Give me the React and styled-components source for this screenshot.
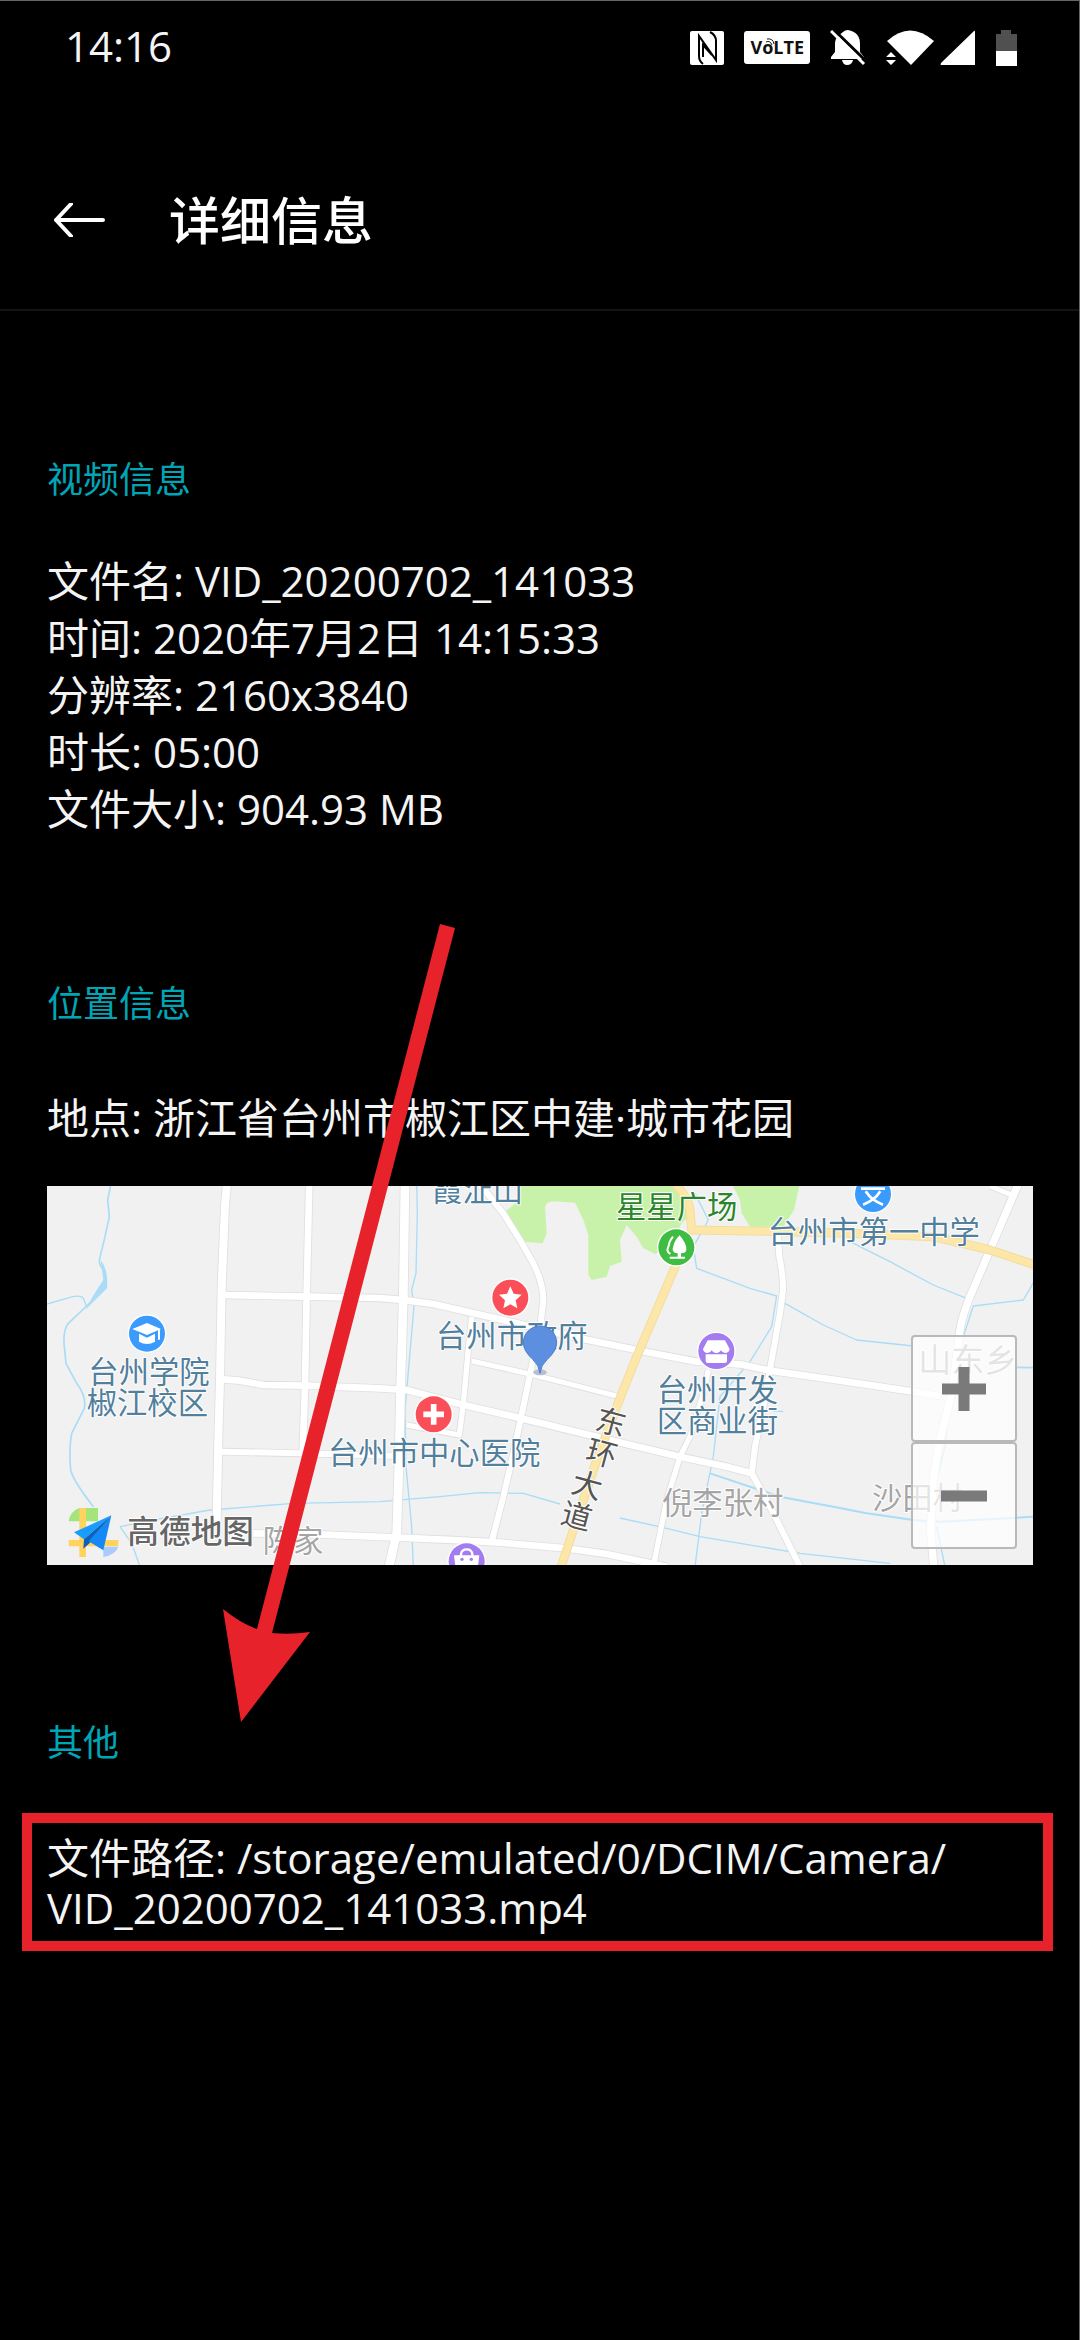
import React from "react";
import styled, { createGlobalStyle } from "styled-components";

const RED = "#e8222a";
const SANS = '"Open Sans", "Noto Sans CJK SC", sans-serif';

const GlobalStyle = createGlobalStyle`
  * { box-sizing: border-box; }
  body { margin: 0; background: #000; }
`;

const Page = styled.div`
  position: relative;
  min-height: 100vh;
  background: #000;
  color: #f4f4f4;
  font-family: ${SANS};
  border-top: 1px solid #666;
  border-right: 1px solid #666;
  overflow: hidden;
`;

const StatusBar = styled.div`
  display: flex;
  align-items: center;
  justify-content: space-between;
  padding: 16px 62px 52px 65px;
`;

const Clock = styled.time`
  padding-bottom: 4px;
  font-size: 42px;
  line-height: 57px;
  font-weight: 400;
`;

const StatusIcons = styled.div`
  display: flex;
  align-items: center;
  gap: 20px;
  svg { display: block; }
`;

const SignalGroup = styled.div`
  display: flex;
  align-items: center;
  gap: 6px;
`;

const VolteBadge = styled.span`
  display: flex;
  background: #fff;
  color: #111;
  border-radius: 3px;
  padding: 0 6px;
  font-size: 18px;
  line-height: 33px;
  font-weight: 700;
`;

const VolteO = styled.span`
  position: relative;
  svg {
    position: absolute;
    top: 7px;
    right: -2px;
  }
`;

const Header = styled.header`
  display: flex;
  align-items: center;
  gap: 63px;
  padding: 60px 52px 59px;
  border-bottom: 2px solid #141414;
`;

const BackButton = styled.button`
  display: block;
  padding: 0;
  border: 0;
  background: none;
  svg { display: block; }
`;

const Title = styled.h1`
  margin: 0;
  font-size: 51px;
  line-height: 60px;
  font-weight: 500;
  color: #fff;
`;

const Content = styled.main`
  display: flex;
  flex-direction: column;
  gap: 143px;
  padding: 145px 46px 145px 47px;
`;

const SectionTitle = styled.h2`
  margin: 0 0 ${(p) => p.$gap}px;
  font-size: 36px;
  line-height: 48px;
  font-weight: 400;
  color: #00a5b6;
`;

const Line = styled.p`
  margin: 0;
  font-size: 42px;
  line-height: ${(p) => (p.$tight ? 50 : 57)}px;
  font-weight: 400;
`;

const PathBox = styled.div`
  margin: 0 -20px 0 -25px;
  padding: 10px 15px 8px;
  border: 10px solid ${RED};
`;

const MapFrame = styled.div`
  position: relative;
  margin: 40px 0 11px;
  height: 379px;
  background: #f1f1f1;
  overflow: hidden;
`;

const MapDrawing = styled.svg`
  display: block;
  width: 100%;
  height: 100%;
  font-family: "Noto Sans CJK SC", sans-serif;
`;

const ZoomControls = styled.div`
  position: absolute;
  right: 16px;
  bottom: 16px;
  display: flex;
  flex-direction: column;
`;

const ZoomButton = styled.button`
  display: flex;
  align-items: center;
  justify-content: center;
  width: 106px;
  height: 107px;
  padding: 0;
  border: 2px solid #b9b9b9;
  border-radius: 4px;
  background: rgba(255, 255, 255, 0.7);
`;

const ArrowOverlay = styled.svg`
  position: absolute;
  left: 0;
  top: 0;
  pointer-events: none;
`;

const roads = [
  [24, "M562 0L555 75L545 320L540 600L535 780L530 1020"],
  [20, "M808 0L800 340L795 620L788 820"],
  [20, "M550 345L800 350L1020 354L1100 361L1180 372L1380 418L1620 475L1800 512L1970 545L2100 553L2190 572L2400 602L2620 635L2700 648"],
  [20, "M550 598L600 602L670 615L800 617L1020 625L1100 630L1260 672L1430 712L1750 790L1920 830L2060 860L2135 880"],
  [18, "M545 815L780 820L1075 828"],
  [26, "M1095 0L1090 350L1082 620L1077 850L1070 1060L1045 1170"],
  [20, "M640 1060L850 1064L1060 1072L1240 1080L1380 1088L1580 1105L1700 1122L1880 1160"],
  [18, "M1310 0L1390 100L1440 180L1480 250Q1510 310 1510 360L1502 430L1475 560L1450 680L1420 820L1390 950L1355 1085"],
  [16, "M1295 410L1282 540L1270 670L1258 765L1100 735"],
  [15, "M1295 543L1470 582L1620 620L1730 648"],
  [16, "M2005 570L1990 640L1950 770L1920 830L1880 960L1840 1160"],
  [18, "M2212 150L2218 230Q2230 290 2229 330L2220 400L2195 540L2170 680L2145 800L2135 880L2180 960L2220 1040L2285 1170"],
  [22, "M2940 0L2910 70L2850 210L2790 350Q2766 410 2760 450L2735 640L2695 800L2680 900L2672 1050L2682 1170"],
  [14, "M2850 18L2915 45"],
];

const highways = [
  "M1895 0Q1945 50 1950 90L1955 150L2380 158L2680 170L2850 210L3000 260",
  "M1945 160L1910 250L1850 390L1790 530L1730 680L1670 840L1610 1020L1560 1170",
];

const rivers = [
  [5, "M215 0L203 60L208 110L195 170L178 240Q176 255 195 275L198 320L140 378L85 430Q70 450 72 490L78 550L110 610Q140 650 133 685L95 760Q86 810 92 870Q98 900 160 980"],
  [4, "M21 372L80 355Q120 342 130 355L140 380"],
  [4, "M240 1040L350 1018L510 990L760 970L1020 965L1200 950L1320 938L1450 940L1560 972"],
  [4, "M240 1040L275 1090L300 1160"],
  [4, "M1740 1014L1880 1045L1980 1070L2280 1120L2550 1150"],
  [4, "M1130 0L1132 100L1128 280L1115 330L1122 380L1095 690L1098 860L1115 1040L1120 1160"],
  [4, "M1965 40L2005 120L1960 200L1970 265L2130 325L2210 348L2195 440L2130 545L2040 650L2020 830L1985 1000L1965 1160"],
  [4, "M2430 185L2550 245L2680 315L2780 355"],
  [4, "M2770 470L2800 378L2950 360L2985 300"],
  [4, "M2235 370L2350 435L2450 480L2620 498"],
  [6, "M2010 880L2220 950L2380 980L2480 1000L2620 1020L2700 1025L2990 1010"],
  [5, "M2930 562L2990 563"],
  [4, "M2730 660L2715 800L2690 900"],
  [4, "M2690 1040L2715 1160"],
  [4, "M2180 690L2230 695"],
];

const labels = [
  { x: 145, y: 608, text: "台州学院" },
  { x: 140, y: 703, text: "椒江校区" },
  { x: 1188, y: 502, text: "台州市政府" },
  { x: 864, y: 852, text: "台州市中心医院" },
  { x: 1176, y: 62, text: "霞沚山" },
  { x: 1728, y: 115, text: "星星广场", fill: "#2b852b" },
  { x: 2183, y: 190, text: "台州市第一中学" },
  { x: 1850, y: 662, text: "台州开发" },
  { x: 1850, y: 756, text: "区商业街" },
  { x: 1866, y: 1002, text: "倪李张村", fill: "#a5a5a5" },
  { x: 2496, y: 987, text: "沙田村", fill: "#a5a5a5" },
  { x: 2635, y: 577, text: "山东乡", fill: "#a5a5a5", size: 99 },
  { x: 668, y: 1117, text: "陈家", fill: "#a5a5a5" },
];

const roadName = [
  ["东", 1713, 727],
  ["环", 1685, 820],
  ["大", 1642, 915],
  ["道", 1610, 1008],
];

function Poi({ x, y, color, children }) {
  return (
    <g transform={`translate(${x} ${y})`}>
      <circle r="58" fill="#fff" />
      <circle r="54" fill={color} />
      {children}
    </g>
  );
}

function AmapLogo() {
  return (
    <g>
      <path d="M118 984H174V1024H86Q90 994 118 984Z" fill="#a3e57a" />
      <path d="M235 1100Q228 1124 190 1131V1100Z" fill="#aacbff" />
      <path d="M118 984H138V1131H118ZM86 1080H235V1099H86Z" fill="#ffd35c" />
      <path d="M214 1006L102 1057L132 1078Z" fill="#1a9cff" />
      <path d="M214 1006L132 1078L130 1106L150 1088Z" fill="#0b62b8" />
      <path d="M214 1006L146 1084L190 1111Z" fill="#1489f5" />
      <text x="262" y="1090" fontSize="95" fontWeight="500" fill="#666" stroke="#fff" strokeWidth="6" paintOrder="stroke">高德地图</text>
    </g>
  );
}

function MapView() {
  return (
    <MapDrawing viewBox="21 18 2958 1137" preserveAspectRatio="xMidYMid slice" role="img" aria-label="地图">
      <rect x="0" y="0" width="3000" height="1180" fill="#f1f1f1" />
      <path d="M1425 0L1440 60L1395 95L1420 150L1455 185L1508 190L1520 160L1515 80Q1520 65 1540 64L1605 68L1630 120L1645 165L1645 285L1655 300L1700 290L1710 258L1745 245L1740 180L1760 135L1790 170L1810 205L1845 222L1890 200L1925 130L1945 110L1920 50L1890 0ZM2070 0L2100 60L2105 100L2130 140H2230L2262 90L2282 0Z" fill="#c8f2a9" />
      <path d="M182 240Q206 270 201 325L135 390L170 330L190 300Z" fill="#a9dcf7" />
      <g fill="none" strokeLinejoin="round">
        {rivers.map(([w, d]) => <path key={d} d={d} stroke="#a9dcf7" strokeWidth={w} />)}
        {roads.map(([w, d]) => <path key={d} d={d} stroke="#dfdfdf" strokeWidth={w + 5} />)}
        {roads.map(([w, d]) => <path key={d} d={d} stroke="#fff" strokeWidth={w} />)}
        {highways.map((d) => <path key={d} d={d} stroke="#f3dca0" strokeWidth="27" />)}
        {highways.map((d) => <path key={d} d={d} stroke="#fde7a8" strokeWidth="21" />)}
      </g>
      {labels.map((l) => (
        <text key={l.text} x={l.x} y={l.y} fontSize={l.size || 91} fontWeight="400" fill={l.fill || "#527f9c"} stroke="#fff" strokeWidth="6" strokeLinejoin="round" paintOrder="stroke">{l.text}</text>
      ))}
      {roadName.map(([c, x, y]) => (
        <text key={c} transform={`translate(${x} ${y}) rotate(15)`} y="33" fontSize="91" textAnchor="middle" fill="#555" stroke="#fff" strokeWidth="6" paintOrder="stroke">{c}</text>
      ))}
      <Poi x={321} y={461} color="#3a9bfd">
        <path d="M-44 -14L0 -32L42 -14L0 4Z" fill="#fff" />
        <path d="M-24 0L0 12L24 0V24Q0 38 -24 24Z" fill="#fff" />
        <path d="M36 -14V18" stroke="#fff" strokeWidth="6" />
      </Poi>
      <Poi x={1411} y={353} color="#fa4f58">
        <path d="M0 -34L10 -12L34 -9L16 8L21 32L0 20L-21 32L-16 8L-34 -9L-10 -12Z" fill="#fff" />
      </Poi>
      <Poi x={1181} y={703} color="#fa4f58">
        <path d="M0 -31V31M-31 0H31" stroke="#fff" strokeWidth="17" />
      </Poi>
      <Poi x={1909} y={202} color="#3fbc42">
        <path d="M10 -36Q32 -10 30 8Q28 18 14 18V28H26V34H-20V28H4V18Q-12 16 -11 4Q-6 -22 10 -36Z" fill="#fff" />
        <path d="M-10 -32Q-22 -16 -22 -8L-27 8Q-26 14 -18 20" fill="none" stroke="#fff" strokeWidth="6" />
      </Poi>
      <Poi x={2029} y={513} color="#a37cf0">
        <path d="M-26 -32H26L40 -6Q38 6 26 6Q18 6 14 -2Q8 8 0 6Q-8 8 -14 -2Q-18 6 -26 6Q-38 6 -40 -6Z" fill="#fff" />
        <path d="M-32 10H32V30Q32 36 26 36H-26Q-32 36 -32 30Z" fill="#fff" />
      </Poi>
      <Poi x={2499} y={42} color="#3a9bfd">
        <path d="M-36 -16H36M-22 -8Q-4 20 30 32M22 -8Q4 20 -30 32" fill="none" stroke="#fff" strokeWidth="8" />
      </Poi>
      <Poi x={1280} y={1144} color="#a37cf0">
        <path d="M-38 -18H38L32 30H-32Z" fill="#fff" />
        <path d="M-17 -16V-22Q-15 -36 0 -36Q15 -36 17 -22V-16" fill="none" stroke="#fff" strokeWidth="7" />
        <circle cx="-14" cy="-6" r="5" fill="#a37cf0" />
        <circle cx="14" cy="-6" r="5" fill="#a37cf0" />
      </Poi>
      <ellipse cx="1500" cy="577" rx="20" ry="9" fill="#b5bfd0" />
      <path d="M1500 580Q1498 556 1478 538Q1450 512 1450 488A50 50 0 0 1 1550 488Q1550 512 1522 538Q1502 556 1500 580Z" fill="#5c8fe0" stroke="#4a7cc8" strokeWidth="3" />
      <AmapLogo />
    </MapDrawing>
  );
}

function NfcIcon() {
  return (
    <svg width="34" height="34" viewBox="0 0 34 34">
      <rect width="34" height="34" rx="2" fill="#fff" />
      <path d="M13 33Q9 30 9 25V5L26 29V10Q26 4 20 1M13 26V14L22 24" fill="none" stroke="#000" strokeWidth="2" />
    </svg>
  );
}

function BellOffIcon() {
  return (
    <svg width="36" height="36" viewBox="0 0 36 36">
      <path d="M13 2Q15 0 18 0Q30 2 30 14V22L34 27V29H1V27L5 22V14Q5 9 8 6Z" fill="#fff" />
      <path d="M12 30H23Q22 35 17 35Q13 35 12 30Z" fill="#fff" />
      <path d="M3 -1L36 31" stroke="#000" strokeWidth="3" />
      <path d="M1 1L34 34" stroke="#fff" strokeWidth="3" />
    </svg>
  );
}

function WifiIcon() {
  return (
    <svg width="48" height="36" viewBox="0 0 48 36">
      <path d="M1 11Q24 -10 48 11L25 35Z" fill="#fff" />
      <path d="M0 27L5 22L10 27ZM0 30H10L5 35Z" fill="#fff" />
    </svg>
  );
}

function SignalIcon() {
  return (
    <svg width="36" height="36" viewBox="0 0 36 36">
      <path d="M34 1Q35 0 35 2V35H1Q0 35 1 33Z" fill="#fff" />
    </svg>
  );
}

function BatteryIcon() {
  return (
    <svg width="21" height="36" viewBox="0 0 21 36">
      <path d="M0 21V4H5V0H15V4H21V21Z" fill="#505050" />
      <path d="M0 21H21V36H0Z" fill="#fff" />
    </svg>
  );
}

export default function App() {
  return (
    <Page>
      <GlobalStyle />
      <StatusBar>
        <Clock>14:16</Clock>
        <StatusIcons>
          <NfcIcon />
          <VolteBadge>
            V
            <VolteO>
              o
              <svg width="9" height="7" viewBox="0 0 9 7">
                <path d="M0 4Q4 2 6 7M1 1Q7 0 8 6" fill="none" stroke="#111" />
              </svg>
            </VolteO>
            LTE
          </VolteBadge>
          <BellOffIcon />
          <SignalGroup>
            <WifiIcon />
            <SignalIcon />
          </SignalGroup>
          <BatteryIcon />
        </StatusIcons>
      </StatusBar>
      <Header>
        <BackButton aria-label="返回">
          <svg width="54" height="34" viewBox="0 0 54 34">
            <path d="M19 1L4 17L19 33M4 17H51" fill="none" stroke="#fff" strokeWidth="4" strokeLinecap="round" strokeLinejoin="round" />
          </svg>
        </BackButton>
        <Title>详细信息</Title>
      </Header>
      <Content>
        <section>
          <SectionTitle $gap={48}>视频信息</SectionTitle>
          <Line>文件名: VID_20200702_141033</Line>
          <Line>时间: 2020年7月2日 14:15:33</Line>
          <Line>分辨率: 2160x3840</Line>
          <Line>时长: 05:00</Line>
          <Line>文件大小: 904.93 MB</Line>
        </section>
        <section>
          <SectionTitle $gap={61}>位置信息</SectionTitle>
          <Line>地点: 浙江省台州市椒江区中建·城市花园</Line>
          <MapFrame>
            <MapView />
            <ZoomControls>
              <ZoomButton aria-label="放大">
                <svg width="44" height="44" viewBox="0 0 44 44">
                  <path d="M22 0V44M0 22H44" stroke="#7a7a7a" strokeWidth="11" />
                </svg>
              </ZoomButton>
              <ZoomButton aria-label="缩小">
                <svg width="46" height="12" viewBox="0 0 46 12">
                  <path d="M0 6H46" stroke="#7a7a7a" strokeWidth="11" />
                </svg>
              </ZoomButton>
            </ZoomControls>
          </MapFrame>
        </section>
        <section>
          <SectionTitle $gap={46}>其他</SectionTitle>
          <PathBox>
            <Line $tight>文件路径: /storage/emulated/0/DCIM/Camera/<wbr />VID_20200702_141033.mp4</Line>
          </PathBox>
        </section>
      </Content>
      <ArrowOverlay width="480" height="1740" viewBox="0 0 480 1740" aria-hidden="true">
        <path d="M440 923L455 927L272 1632Q290 1634 310 1631L241 1721L223 1608Q240 1622 257 1628Z" fill={RED} />
      </ArrowOverlay>
    </Page>
  );
}
